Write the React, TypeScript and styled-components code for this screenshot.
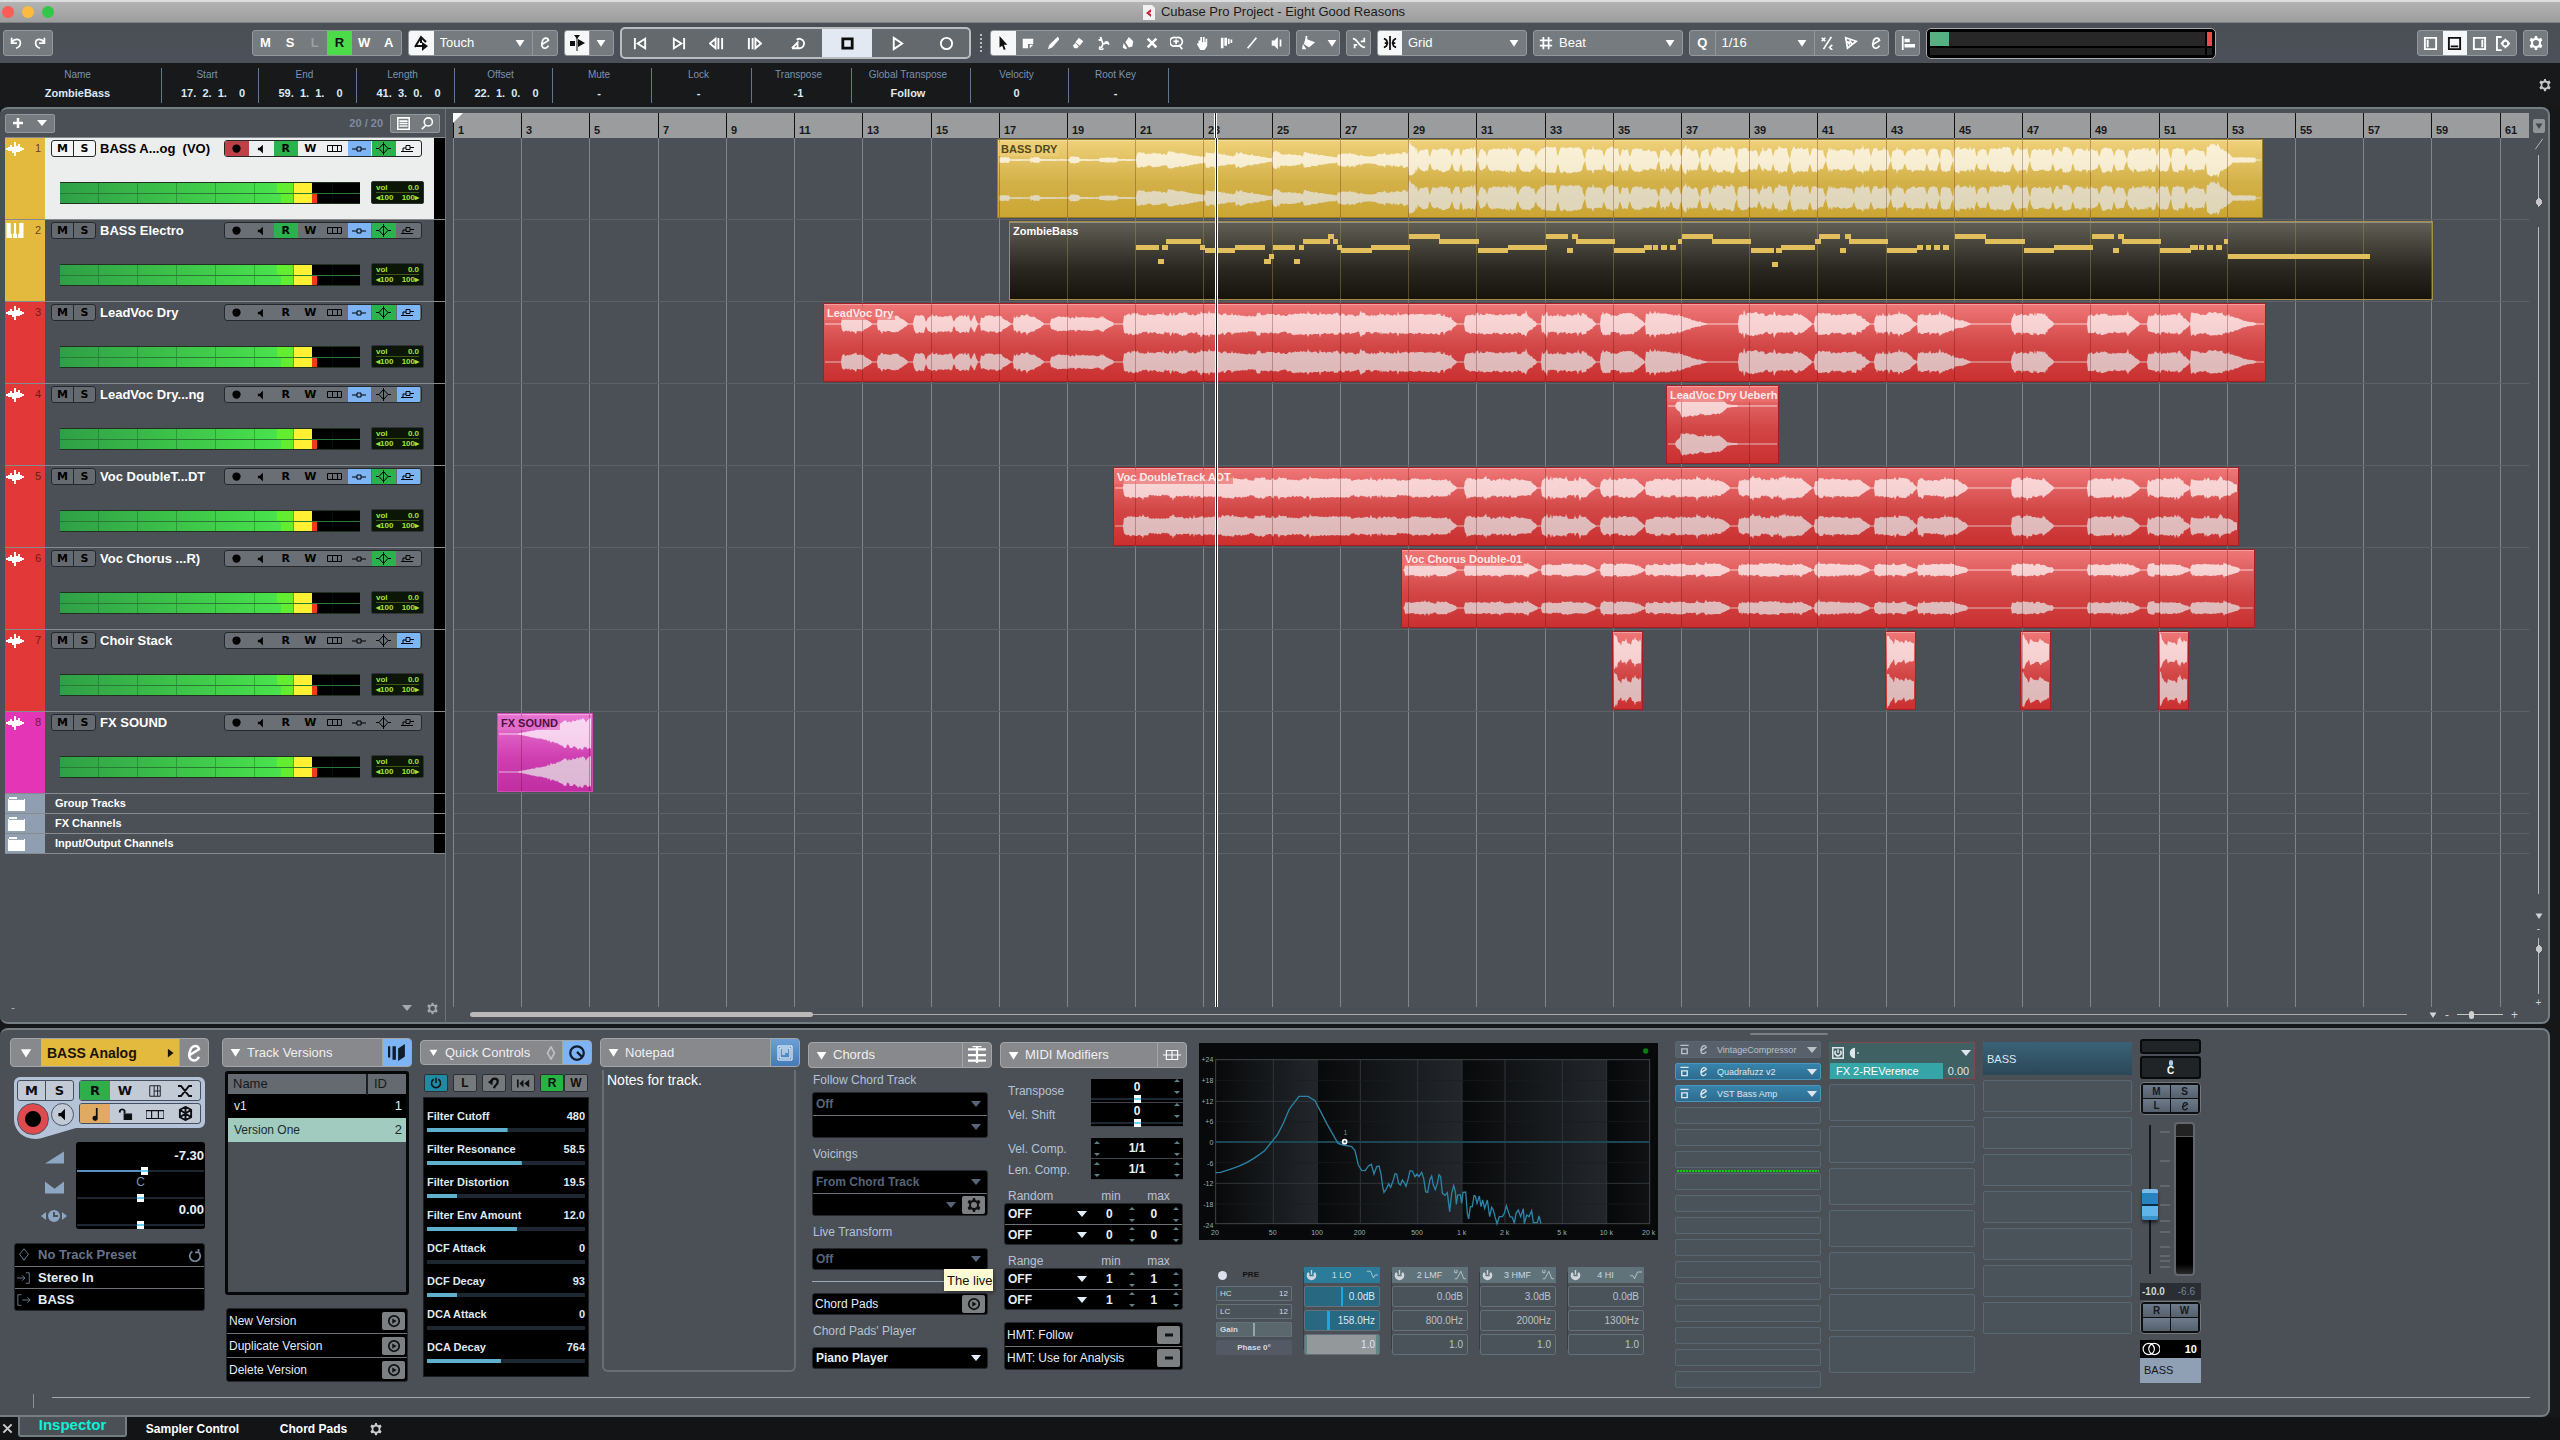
import React from "react";
import styled, { createGlobalStyle, css } from "styled-components";

/* ------------------------------------------------------------------ base */

const Global = createGlobalStyle`
  * { box-sizing: border-box; }
  html, body { margin: 0; padding: 0; background: #131517; }
  body, button, input, select, textarea, table {
    font-family: "Liberation Sans", Arial, Helvetica, sans-serif;
    font-size: 12px;
    line-height: 14px;
  }
  button, select, input, textarea { border: 0; margin: 0; padding: 0; background: none; color: inherit; border-radius: 0; outline: 0; }
  select { appearance: none; }
  svg { display: block; flex: none; }
`;

const C = {
  panel: "#4b4f56",
  edge: "#737d82",
  black: "#151719",
  group: "#757b7e",
  groupEdge: "#92989b",
  dim: "#b4c3d6",
  blue: "#7db4f5",
  green: "#2bb24c",
};

type IconProps = { d?: string; f?: string; s?: number; w?: number };
const Icon = ({ d, f, s = 16, w = 2 }: IconProps) => (
  <svg width={s} height={s} viewBox="0 0 16 16" fill="none" stroke="currentColor" strokeWidth={w} aria-hidden="true">
    {f && <path d={f} fill="currentColor" stroke="none" />}
    {d && <path d={d} />}
  </svg>
);

const P = {
  undo: "M3 2v6h6M3 8C6 2 13 3 13 8c0 3-2 5-5 6",
  redo: "M13 2v6H7M13 8C10 2 3 3 3 8c0 3 2 5 5 6",
  e: "M4 10l8-5C11 1 6 2 5 6c-2 5 0 8 3 8 2 0 3-1 4-3",
  prev: "M2 2v12M13 3L5 8l8 5z",
  next: "M14 2v12M3 3l8 5-8 5z",
  rew: "M7 3L1 8l6 5zM10 2v12M14 2v12",
  fwd: "M9 3l6 5-6 5zM6 2v12M2 2v12",
  cycle: "M1 13l6-6v6M1 13h8a5 5 0 1 0-3-9",
  stop: "M3 3h10v10H3z",
  play: "M4 2l9 6-9 6z",
  rec: "M8 2a6 6 0 1 0 0 12A6 6 0 1 0 8 2z",
};
const Gear = ({ s = 16 }: { s?: number }) => (
  <svg width={s} height={s} viewBox="0 0 16 16" aria-hidden="true">
    <path
      fillRule="evenodd"
      fill="currentColor"
      d="M7 1h2l.5 2 1.5.7 2-.9 1.4 2.4L12.900 7v2l1.500 1.800L13 13.200l-2-.9-1.500.7L9 15H7l-.5-2-1.500-.7-2 .9-1.400-2.400L3.100 9V7L1.600 5.200 3 2.800l2 .9L6.500 3zM8 5a3 3 0 1 0 0 6 3 3 0 1 0 0-6z"
    />
  </svg>
);
const Arrow = ({ s = 10 }: { s?: number }) => <Icon s={s} f="M1 3h14L8 14z" />;
const Caret = () => (
  <svg width={10} height={6} viewBox="0 0 10 6" aria-hidden="true">
    <path d="M0 0h10L5 6z" fill="currentColor" />
  </svg>
);

const Shell = styled.div`
  display: flex;
  flex-direction: column;
  height: 100vh;
  min-height: 1000px;
  overflow: hidden;
  background: ${C.black};
  color: #fff;
`;

/* ------------------------------------------------------------- title bar */

const TitleBar = styled.header`
  display: flex;
  align-items: center;
  height: 23px;
  padding: 0 14px 0 2px;
  border-top: 2px solid #dcdddf;
  background: linear-gradient(#b3b3b3, #9d9d9d);
  border-bottom: 1px solid #7e8082;
  color: #1b1b1b;
  font-size: 13px;
`;
const Lights = styled.div`
  display: flex;
  flex: 1;
  gap: 8px;
`;
const Light = styled.button<{ $c: string }>`
  width: 12px;
  height: 12px;
  border-radius: 50%;
  background: ${(p) => p.$c};
`;
const Title = styled.div`
  display: flex;
  align-items: center;
  gap: 6px;
`;
const Fill = styled.div<{ $size?: number }>`
  flex: ${(p) => (p.$size ? `0 0 ${p.$size}px` : "1")};
`;

/* --------------------------------------------------------------- toolbar */

const Toolbar = styled.div`
  display: flex;
  align-items: center;
  gap: 6px;
  height: 40px;
  padding: 0 12px 0 3px;
  background: linear-gradient(#4a4f55, #4c5059);
`;
const Group = styled.div<{ $w?: number }>`
  display: flex;
  flex: none;
  width: ${(p) => (p.$w ? p.$w + "px" : "auto")};
  height: 26px;
  border: 1px solid ${C.groupEdge};
  border-radius: 3px;
  background: ${C.group};
  overflow: hidden;
`;
const Tool = styled.button<{ $on?: boolean; $green?: boolean; $off?: boolean; $sep?: boolean }>`
  display: flex;
  flex: 1;
  align-items: center;
  justify-content: center;
  min-width: 23px;
  font-size: 13px;
  font-weight: bold;
  color: ${(p) => (p.$on || p.$green ? "#101010" : p.$off ? "#9ba0a3" : "#fff")};
  background: ${(p) => (p.$green ? "#4cdb49" : p.$on ? "#f6f7f8" : "transparent")};
  border-left: ${(p) => (p.$sep ? "1px solid " + C.groupEdge : "0")};
`;
const Pick = styled.label<{ $w: number; $sep?: boolean; $tight?: boolean }>`
  display: grid;
  align-items: center;
  width: ${(p) => p.$w}px;
  border-left: ${(p) => (p.$sep ? "1px solid " + C.groupEdge : "0")};
  > * { grid-area: 1 / 1; }
  > select { width: 100%; height: 100%; padding: 0 18px 0 ${(p) => (p.$tight ? 1 : 6)}px; font-size: 13px; line-height: 16px; }
  > svg { justify-self: end; margin-right: 7px; pointer-events: none; }
`;
const Transport = styled.div`
  display: grid;
  flex: none;
  grid-template-columns: 37px 39px 37px 39px 48px 50px 51px 46px;
  width: 351px;
  height: 32px;
  border: 2px solid #b9bdbf;
  border-radius: 5px;
  background: #63696c;
  overflow: hidden;
`;
const TransportButton = styled.button<{ $on?: boolean }>`
  display: flex;
  align-items: center;
  justify-content: center;
  color: ${(p) => (p.$on ? "#0c0c0c" : "#fff")};
  background: ${(p) => (p.$on ? "#e3e9f3" : "transparent")};
`;
const Grip = styled.div`
  width: 7px;
  height: 18px;
  background: repeating-linear-gradient(#b9bdbf 0 2px, transparent 2px 4px) center / 2px 18px no-repeat;
`;
const LoadMeter = styled.div`
  display: grid;
  grid-template-columns: 1fr 5px;
  grid-template-rows: 14px 7px;
  gap: 2px;
  width: 290px;
  height: 31px;
  padding: 3px;
  border: 1px solid #a6a9ab;
  border-radius: 5px;
  background: #000;
`;
const LoadBar = styled.div<{ $hot?: boolean; $level?: number }>`
  background: ${(p) =>
    p.$hot ? "#ea4c4c" : p.$level ? `linear-gradient(90deg, #57b083 ${p.$level}%, #272727 ${p.$level}%)` : "#202020"};
`;

const toolIcons: IconProps[] = [
  { f: "M4 0l9 10H9l2 5-2 1-2-5-3 2z" },
  { f: "M2 3h12v6H8v5H2zM10 10h4l-4 4z" },
  { f: "M14 1l1 3-8 9-5 2 2-5 9-9z" },
  { f: "M9 2l5 4-4 5-5-4zM5 8l4 4-2 2H4l-2-3z" },
  { d: "M5 1l3 8 6-1M8 9l-2 5M3 5l4-2M10 8a2 2 0 1 1 4 2M5 12a2 2 0 1 0 3 2" },
  { f: "M9 1l5 5-1 6-4 1-4-6zM3 8l4 6-2 1-3-2z" },
  { d: "M3 3l10 10M13 3L3 13", w: 3 },
  { d: "M7 2a5 5 0 1 0 0 9 5 5 0 1 0 0-9zM10 10l4 5M7 4v5M4 6h6" },
  { f: "M4 5h2V1h2v6h1V1h2v6h1V3h2v8l-3 5H6L2 9l2-1z" },
  { f: "M1 2h3v12H1zM5 2h3v9H5zM9 3h2v6H9zM12 4h2v4h-2z" },
  { d: "M13 2L3 14" },
  { f: "M2 5h3l4-4v14l-4-4H2z", d: "M12 4v8", w: 2 },
];
const toolNames = ["Select", "Range", "Draw", "Erase", "Split", "Glue", "Mute", "Zoom", "Hand", "Time Warp", "Line", "Play"];

const TopToolbar = () => (
  <Toolbar>
    <Group $w={50}>
      <Tool aria-label="Undo"><Icon d={P.undo} s={14} /></Tool>
      <Tool aria-label="Redo"><Icon d={P.redo} s={14} /></Tool>
    </Group>
    <Fill $size={187} />
    <Group $w={150}>
      <Tool>M</Tool><Tool>S</Tool><Tool $off>L</Tool><Tool $green>R</Tool><Tool>W</Tool><Tool>A</Tool>
    </Group>
    <Group $w={150}>
      <Tool $on aria-label="Automation"><Icon d="M2 12L8 2l5 5M8 2v6M3 11h8" f="M9 7l6 4-6 5z" w={2} /></Tool>
      <Pick $w={98}>
        <select aria-label="Automation mode"><option>Touch</option></select>
        <Arrow />
      </Pick>
      <Tool $sep aria-label="Edit automation"><Icon d={P.e} s={14} /></Tool>
    </Group>
    <Group $w={50}>
      <Tool $on aria-label="Auto scroll"><Icon d="M8 0v16" f="M1 6h5v5H1zM9 4l7 4-7 4zM5 0h6L8 4z" w={1} /></Tool>
      <Tool $sep aria-label="Auto scroll options"><Arrow /></Tool>
    </Group>
    <Transport>
      {([["prev", "Go to start"], ["next", "Go to end"], ["rew", "Rewind"], ["fwd", "Forward"], ["cycle", "Cycle"], ["stop", "Stop"], ["play", "Play"], ["rec", "Record"]] as const).map(
        ([k, n]) => (
          <TransportButton key={k} aria-label={n} $on={k === "stop"}>
            <Icon d={P[k]} s={15} w={k === "stop" ? 3 : 2} />
          </TransportButton>
        )
      )}
    </Transport>
    <Grip />
    <Group $w={300}>
      {toolIcons.map((t, i) => (
        <Tool key={i} aria-label={toolNames[i]} $on={i === 0}><Icon {...t} s={14} /></Tool>
      ))}
    </Group>
    <Group $w={44}>
      <Tool aria-label="Colour"><Icon s={14} f="M4 3l11 4-7 6-6-4zM1 9l4 6H0z" d="M5 0v5" /></Tool>
      <Tool aria-label="Colour options"><Arrow /></Tool>
    </Group>
    <Group $w={25}><Tool aria-label="Snap to zero"><Icon d="M1 3c6 0 6 10 14 10M10 6h4V2M3 14v-4h3" s={14} /></Tool></Group>
    <Group $w={150}>
      <Tool $on aria-label="Snap"><Icon d="M8 0v16M1 3c5 1 5 9 0 10M15 3c-5 1-5 9 0 10M2 8h4M10 8h4" s={14} /></Tool>
      <Pick $w={124}>
        <select aria-label="Snap type"><option>Grid</option></select>
        <Arrow />
      </Pick>
    </Group>
    <Group $w={150}>
      <Tool aria-label="Grid type"><Icon d="M5 1v14M11 1v14M1 5h14M1 11h14" s={14} /></Tool>
      <Pick $w={124} $tight>
        <select aria-label="Grid"><option>Beat</option></select>
        <Arrow />
      </Pick>
    </Group>
    <Group $w={200}>
      <Tool>Q</Tool>
      <Pick $w={99} $sep>
        <select aria-label="Quantize"><option>1/16</option></select>
        <Arrow />
      </Pick>
      <Tool $sep aria-label="Iterative quantize"><Icon d="M13 1L4 15M2 2l4 4M6 2L2 6M14 10l-3 3 3 3" s={14} /></Tool>
      <Tool aria-label="Audio warp"><Icon d="M2 2l12 4-10 8zM4 6l2 3 1-3 2 3" s={14} /></Tool>
      <Tool aria-label="Quantize panel"><Icon d={P.e} s={14} /></Tool>
    </Group>
    <Group $w={25}><Tool aria-label="Align"><Icon f="M1 0h2v16H1zM4 3h6v4H4zM4 9h12v4H4z" s={14} /></Tool></Group>
    <LoadMeter>
      <LoadBar $level={7} /><LoadBar $hot /><LoadBar /><LoadBar />
    </LoadMeter>
    <Fill />
    <Group $w={100}>
      <Tool aria-label="Left zone"><Icon d="M2 2h12v12H2zM5 4v8" s={15} /></Tool>
      <Tool $on aria-label="Lower zone"><Icon d="M2 2h12v12H2zM4 11h8" s={15} /></Tool>
      <Tool aria-label="Right zone"><Icon d="M2 2h12v12H2zM11 4v8" s={15} /></Tool>
      <Tool aria-label="Zone setup"><Icon d="M6 1H1v14h5M10 5a3 3 0 1 0 0 6 3 3 0 1 0 0-6zM10 3v2M10 11v2M5 8h2M13 8h2" s={15} /></Tool>
    </Group>
    <Group $w={25}><Tool aria-label="Set up toolbar"><Gear /></Tool></Group>
  </Toolbar>
);

/* -------------------------------------------------------------- info line */

const InfoLine = styled.div`
  display: flex;
  align-items: center;
  height: 44px;
  padding-right: 8px;
  background: #17191b;
`;
const InfoCell = styled.dl<{ $w: number }>`
  display: flex;
  flex-direction: column;
  align-items: center;
  gap: 6px;
  width: ${(p) => p.$w}px;
  height: 35px;
  margin: 0;
  padding: 1px 6px 0 0;
  border-right: 1px solid #5f7896;
  dt { font-size: 10px; line-height: 12px; color: #7b93b0; white-space: nowrap; }
  dd { margin: 0; font-size: 11px; line-height: 12px; font-weight: bold; color: #dde8f5; white-space: pre; }
`;
const InfoGear = styled.button`
  color: #c4c6c8;
`;
const info: [string, string, number][] = [
  ["Name", "ZombieBass", 162],
  ["Start", "    17.  2.  1.    0", 97],
  ["End", "    59.  1.  1.    0", 98],
  ["Length", "    41.  3.  0.    0", 98],
  ["Offset", "    22.  1.  0.    0", 98],
  ["Mute", "-", 99],
  ["Lock", "-", 100],
  ["Transpose", "-1", 100],
  ["Global Transpose", "Follow", 119],
  ["Velocity", "0", 98],
  ["Root Key", "-", 100],
];

/* ------------------------------------------------------------- track list */

const Workspace = styled.main`
  display: flex;
  flex: 1;
  min-height: 0;
  margin-right: 10px;
  border: solid ${C.edge};
  border-width: 2px 2px 2px 0;
  border-radius: 8px;
  background: ${C.panel};
`;
const TrackList = styled.section`
  display: flex;
  flex: none;
  flex-direction: column;
  width: 446px;
  padding-left: 5px;
  border-right: 1px solid #6d7277;
`;
const ListHead = styled.div`
  display: flex;
  align-items: center;
  height: 29px;
  padding-right: 5px;
  border-bottom: 1px solid #868b8f;
`;
const SmallGroup = styled.div`
  display: flex;
  align-items: center;
  justify-content: space-around;
  width: 50px;
  height: 19px;
  border: 1px solid ${C.groupEdge};
  border-radius: 2px;
  background: ${C.group};
`;
const Count = styled.span`
  margin: 0 7px 0 auto;
  font-size: 11px;
  font-weight: bold;
  color: #7f8ba0;
`;
const TrackRow = styled.article<{ $sel?: boolean }>`
  display: flex;
  height: 82px;
  border-bottom: 1px solid #868b8f;
  color: ${(p) => (p.$sel ? "#000" : "#fff")};
`;
const TrackTag = styled.div<{ $c: string }>`
  display: flex;
  justify-content: space-between;
  width: 40px;
  padding: 2px 4px 0 1px;
  background: ${(p) => p.$c};
  font-size: 11px;
  line-height: 17px;
  color: #fff;
  span { color: rgba(60, 20, 10, 0.75); }
`;
const TrackBody = styled.div<{ $sel?: boolean }>`
  display: flex;
  flex: 1;
  flex-direction: column;
  justify-content: space-between;
  padding: 2px 10px 15px 6px;
  background: ${(p) => (p.$sel ? "#eceded" : C.panel)};
`;
const Gutter = styled.div`
  width: 11px;
  background: #000;
`;
const TrackTop = styled.div`
  display: flex;
  align-items: center;
  height: 17px;
`;
const Pair = styled.div<{ $sel?: boolean }>`
  display: flex;
  width: 45px;
  height: 17px;
  border: 1px solid #26292c;
  border-radius: 3px;
  background: ${(p) => (p.$sel ? "#f4f5f5" : "#656a70")};
`;
const PairButton = styled.button`
  flex: 1;
  color: #000;
  font-family: "DejaVu Sans", sans-serif;
  font-size: 11px;
  font-weight: bold;
  & + & { border-left: 1px solid #26292c; }
`;
const TrackName = styled.h3`
  flex: 1;
  margin: 0 0 0 4px;
  font-size: 13px;
  line-height: 16px;
  white-space: pre;
`;
const Strip = styled.div<{ $sel?: boolean }>`
  display: flex;
  width: 198px;
  height: 17px;
  margin-right: 2px;
  border: 1px solid #26292c;
  border-radius: 3px;
  background: ${(p) => (p.$sel ? "#eeeff0" : "#6a6f75")};
  overflow: hidden;
`;
const StripButton = styled.button<{ $bg?: string }>`
  display: flex;
  flex: 1;
  align-items: center;
  justify-content: center;
  margin-right: 1px;
  color: #000;
  font-family: "DejaVu Sans", sans-serif;
  font-size: 11px;
  font-weight: bold;
  background: ${(p) => p.$bg || "transparent"};
`;
const MeterRow = styled.div`
  display: flex;
  align-items: center;
  gap: 11px;
  padding-left: 9px;
`;
const Meter = styled.div`
  width: 300px;
  height: 22px;
  border: solid #22301f;
  border-width: 1px 0;
  background: #000;
`;
const MeterChannel = styled.div<{ $g: number; $y: number; $r: number }>`
  height: 10px;
  background:
    repeating-linear-gradient(90deg, transparent 0 38px, rgba(0, 60, 20, 0.3) 38px 39px),
    linear-gradient(90deg, #2f9f47, #49e24c ${(p) => p.$g}px, #62ee2f ${(p) => p.$g}px 234px, #fff034 234px ${(p) => p.$y}px, #f03a1c ${(p) => p.$y}px ${(p) => p.$r}px, #000 ${(p) => p.$r}px);
  & + & { border-top: 1px solid #2a7a35; }
`;
const Lcd = styled.div`
  display: grid;
  grid-template-columns: 1fr 1fr;
  align-items: center;
  width: 53px;
  height: 23px;
  padding: 1px 4px;
  border: 1px solid #2e3336;
  border-radius: 2px;
  background: #0b1606;
  color: #a2e436;
  font-size: 8px;
  line-height: 9px;
  font-weight: bold;
  span:nth-child(even) { text-align: right; }
  span:nth-child(-n + 2) { border-bottom: 1px solid #3c5a14; }
`;
const FolderRow = styled.div`
  display: flex;
  height: 20px;
  border-bottom: 1px solid #868b8f;
`;
const FolderTag = styled.div`
  display: flex;
  align-items: center;
  width: 40px;
  padding-left: 3px;
  background: #8f9fb1;
`;
const FolderName = styled.div`
  flex: 1;
  padding-left: 10px;
  font-size: 11px;
  line-height: 18px;
  font-weight: bold;
`;
const ListFoot = styled.div`
  display: flex;
  align-items: center;
  gap: 14px;
  margin-top: auto;
  padding: 0 6px 4px;
  height: 24px;
  color: #a5a9ac;
  span { margin-right: auto; }
`;

const Y = "#e3ba3d";
const R = "#e33838";
const B = C.blue;
const G = C.green;
type Track = { n: string; c: string; on: (string | 0)[]; sel?: boolean; midi?: boolean };
const tracks: Track[] = [
  { n: "BASS A...og  (VO)", c: Y, on: ["#bd4146", 0, G, 0, 0, B, G, 0], sel: true },
  { n: "BASS Electro", c: Y, on: [0, 0, G, 0, 0, B, G, 0], midi: true },
  { n: "LeadVoc Dry", c: R, on: [0, 0, 0, 0, 0, B, G, B] },
  { n: "LeadVoc Dry...ng", c: R, on: [0, 0, 0, 0, 0, B, 0, B] },
  { n: "Voc DoubleT...DT", c: R, on: [0, 0, 0, 0, 0, B, G, B] },
  { n: "Voc Chorus ...R)", c: R, on: [0, 0, 0, 0, 0, 0, G, 0] },
  { n: "Choir Stack", c: R, on: [0, 0, 0, 0, 0, 0, 0, B] },
  { n: "FX SOUND", c: "#e435b6", on: [0, 0, 0, 0, 0, 0, 0, 0] },
];
const stripNames = ["Record enable", "Monitor", "Read", "Write", "Lanes", "Inserts", "Equalizer", "Sends"];
const stripIcons: React.ReactNode[] = [
  <Icon s={11} f="M8 2a6 6 0 1 0 0 12A6 6 0 1 0 8 2z" />,
  <Icon s={10} f="M3 6h3l5-5v14l-5-5H3z" />,
  "R",
  "W",
  <svg width={15} height={9} viewBox="0 0 15 9" fill="none" stroke="currentColor"><path d="M.5 1.500h14v6h-14zM5.500 1v6M10.500 1v6" /></svg>,
  <svg width={14} height={8} viewBox="0 0 14 8" fill="none" stroke="currentColor"><path d="M0 4h5M9 4h5M5 2h4v4H5z" /></svg>,
  <svg width={15} height={13} viewBox="0 0 15 13" fill="none" stroke="currentColor"><path d="M7.500 0v13M0 6.500h3M12 6.500h3M7.500 1.500l-4.500 5 4.500 5 4.500-5z" /></svg>,
  <svg width={14} height={9} viewBox="0 0 14 9" fill="none" stroke="currentColor"><path d="M0 7.500h12M2 7V4h3M9 3.500h4M5 1.500h4v4H5z" /></svg>,
];

const TrackItem = ({ t, i }: { t: Track; i: number }) => (
  <TrackRow $sel={t.sel}>
    <TrackTag $c={t.c}>
      {t.midi ? (
        <svg width={18} height={17} viewBox="0 0 16 16"><path d="M0 1h4v10h1v4H0zM6 11h1V1h2v10h1v4H6zM12 1h4v14h-5v-4h1z" fill="#fff" /></svg>
      ) : (
        <svg width={18} height={17} viewBox="0 0 18 17" stroke="#fff" strokeWidth={2}>
          <path d="M1 8v2M3 7v4M5 5v6M7 7v6M9 2v14M11 6v6M13 4v8M15 7v4M17 8v2M0 9h18" />
        </svg>
      )}
      <span>{i + 1}</span>
    </TrackTag>
    <TrackBody $sel={t.sel}>
      <TrackTop>
        <Pair $sel={t.sel}>
          <PairButton aria-label="Mute">M</PairButton>
          <PairButton aria-label="Solo">S</PairButton>
        </Pair>
        <TrackName>{t.n}</TrackName>
        <Strip $sel={t.sel}>
          {stripIcons.map((ic, k) => (
            <StripButton key={k} $bg={t.on[k] || undefined} aria-label={stripNames[k]}>{ic}</StripButton>
          ))}
        </Strip>
      </TrackTop>
      <MeterRow>
        <Meter>
          <MeterChannel $g={217} $y={252} $r={252} />
          <MeterChannel $g={221} $y={252} $r={257} />
        </Meter>
        <Lcd>
          <span>vol</span><span>0.0</span>
          <span>◂100</span><span>100▸</span>
        </Lcd>
      </MeterRow>
    </TrackBody>
    <Gutter />
  </TrackRow>
);

/* --------------------------------------------------------------- timeline */

const PX_PER_BAR = 34.11;
const ORIGIN = 453;
const barX = (bar: number) => Math.round((bar - 1) * PX_PER_BAR);
const bars = Array.from({ length: 31 }, (_, i) => 1 + i * 2);

const Timeline = styled.section`
  display: flex;
  flex: 1;
  flex-direction: column;
  min-width: 0;
  margin: 4px 0 0 7px;
`;
const RulerRow = styled.div`
  display: flex;
  height: 25px;
`;
const Ruler = styled.div`
  position: relative;
  flex: 1;
  background: #9b9c9e;
  overflow: hidden;
`;
const RulerMark = styled.div`
  position: absolute;
  top: 0;
  bottom: 0;
  padding: 11px 0 0 4px;
  border-left: 1px solid #111;
  color: #17181a;
  font-size: 11px;
  line-height: 13px;
  font-weight: bold;
`;
const Locator = styled.div`
  position: absolute;
  left: 0;
  top: 0;
  border: 5px solid transparent;
  border-top-color: #fff;
  border-left-color: #fff;
`;
const Rail = styled.div`
  display: flex;
  flex: none;
  flex-direction: column;
  align-items: center;
  gap: 5px;
  width: 19px;
  color: #d0d2d4;
  font-size: 10px;
  line-height: 8px;
`;
const RulerButton = styled.button`
  display: flex;
  align-items: center;
  justify-content: center;
  width: 12px;
  height: 14px;
  margin-top: 6px;
  border-radius: 2px;
  background: #8f9497;
  color: #43474b;
`;
const Stage = styled.div`
  display: flex;
  flex: 1;
  min-height: 0;
`;
const Canvas = styled.div`
  position: relative;
  flex: 1;
  min-width: 0;
  border-left: 1px solid #81868c;
  overflow: hidden;
`;
const GridLine = styled.div`
  position: absolute;
  top: 0;
  bottom: 0;
  width: 1px;
  background: #80858b;
`;
const Lane = styled.div<{ $h: number }>`
  position: relative;
  height: ${(p) => p.$h}px;
  border-bottom: 1px solid #5d6269;
`;
const clipSkins = {
  yellow: css`
    background: linear-gradient(#efd17a, #d3b149 55%, #cba634);
    border-color: #9a7c26;
    color: #55481d;
    --name: rgba(236, 206, 118, 0.7);
  `,
  midi: css`
    background: linear-gradient(#625f56, #2b2821 60%, #16130c);
    border-color: #a58d45;
    color: #fff;
    --name: transparent;
  `,
  red: css`
    background: linear-gradient(#ef7777, #d24646 55%, #cb3030);
    border-color: #a51f22;
    color: #fbeaea;
    --name: rgba(236, 114, 114, 0.7);
  `,
  pink: css`
    background: linear-gradient(#ea7bd2, #d040b2 55%, #c02ea2);
    border-color: #d04ab4;
    color: #4d1241;
    --name: rgba(228, 110, 204, 0.7);
  `,
};
const ClipBox = styled.div<{ $skin: keyof typeof clipSkins }>`
  position: absolute;
  top: 1px;
  height: 79px;
  border: 1px solid;
  box-shadow: inset 0 1px 0 rgba(255, 255, 255, 0.3);
  overflow: hidden;
  ${(p) => clipSkins[p.$skin]}
`;
const ClipName = styled.div`
  position: absolute;
  left: 0;
  top: 2px;
  padding: 0 2px 0 3px;
  font-size: 11px;
  line-height: 14px;
  font-weight: bold;
  white-space: nowrap;
  background: var(--name);
`;
const Cursor = styled.div`
  position: absolute;
  top: 0;
  bottom: 0;
  left: 761px;
  width: 3px;
  background: linear-gradient(90deg, #fff 1px, #222 1px 2px, #fff 2px);
`;

/* Each phrase is [start, end, level at start, level at end] in arrangement pixels. */
type Phrase = [number, number, number, number];

const rng = (seed: number) => () => {
  seed = (seed * 1664525 + 1013904223) % 4294967296;
  return seed / 4294967296;
};
const wavePath = (phrases: Phrase[], x0: number, w: number, mid: number, seed: number) => {
  const rand = rng(seed);
  const up: string[] = [];
  const lo: string[] = [];
  let slow = 0.85;
  for (let x = 1; x < w - 2; x += 1) {
    const p = phrases.find((q) => x + x0 >= q[0] && x + x0 <= q[1]);
    let a = 0.6;
    let b = 0.6;
    if (p) {
      const t = (x + x0 - p[0]) / Math.max(1, p[1] - p[0]);
      if (rand() < 0.2) slow = 0.68 + rand() * 0.27;
      const peak = rand() < 0.04 ? 0.25 : 0;
      const level = p[2] + (p[3] - p[2]) * t;
      a = Math.max(0.7, level * (slow + peak + (rand() - 0.5) * 0.16));
      b = Math.max(0.7, level * (slow + peak + (rand() - 0.5) * 0.16));
    }
    up.push(`${x} ${(mid - a).toFixed(1)}`);
    lo.unshift(`${x} ${(mid + b).toFixed(1)}`);
  }
  return `M${up.join("L")}L${lo.join("L")}z`;
};

const chain = (from: number, to: number, amp: number, seed: number): Phrase[] => {
  const rand = rng(seed);
  const out: Phrase[] = [];
  let x = from;
  while (x < to) {
    const l = 7 + Math.floor(rand() * 24);
    const end = Math.min(to, x + l);
    out.push([x, x + 1, amp * 0.7, amp], [x + 2, end - 2, amp * 1.1, amp * 1.1], [end - 1, end, amp * 0.6, amp * 0.35]);
    x = end + (rand() < 0.45 ? 2 : 1);
  }
  return out;
};
const vox = (spans: [number, number, number?][], amp: number): Phrase[] =>
  spans.flatMap(([a, b, tail]) =>
    tail !== undefined
      ? ([[a, a + (b - a) * 0.45, amp, amp], [a + (b - a) * 0.45, b, amp, tail]] as Phrase[])
      : ([[a, a + 4, amp * 0.8, amp], [a + 4, b - 9, amp, amp * 0.95], [b - 9, b, amp * 0.9, 2]] as Phrase[])
  );

const bassHits: Phrase[] = [
  [997, 1008, 3, 3], [1030, 1038, 3, 3], [1069, 1078, 4, 3], [1099, 1116, 3, 3], [997, 1135, 1, 1],
  [1136, 1166, 10, 6], [1167, 1204, 10, 3], [1205, 1234, 9, 5], [1235, 1271, 9, 2], [1272, 1302, 10, 5], [1303, 1336, 10, 3],
  [1337, 1375, 8, 4], [1376, 1407, 6, 9], [1408, 1416, 20, 12],
];
const later: [number, number, number?][] = [
  [1464, 1535], [1541, 1594], [1600, 1643], [1645, 1728], [1738, 1810], [1814, 1868], [1874, 1915], [1917, 1966],
  [2011, 2052], [2087, 2138], [2147, 2188],
];
const leadPhrases = [
  ...vox([[841, 870], [877, 906]], 10),
  ...chain(913, 976, 9, 3),
  ...vox([[980, 1009], [1013, 1042]], 10),
  ...vox([[1050, 1112]], 8),
  ...vox([[1123, 1455], ...later.slice(0, 3), [1645, 1705, 1], ...later.slice(4, 7), [1917, 1969, 1], ...later.slice(8), [2190, 2255, 1]], 12),
];
const doublePhrases = vox([[1123, 1455], ...later, [2190, 2238]], 11);
const chorusPhrases = vox([[1404, 1455], [1464, 1536], ...later.slice(1), [2190, 2238]], 7);
const choir = (x: number): Phrase[] => [[x + 1, x + 3, 20, 20], [x + 4, x + 8, 16, 9], [x + 9, x + 18, 15, 10], [x + 19, x + 28, 16, 11]];

type Clip = { lane: number; name?: string; x: number; w: number; skin: keyof typeof clipSkins; wave?: Phrase[] };
const clips: Clip[] = [
  { lane: 0, name: "BASS DRY", x: 997, w: 1266, skin: "yellow", wave: [...bassHits, ...chain(1417, 2205, 12, 7), [2206, 2222, 18, 14], [2223, 2232, 12, 3], [2233, 2254, 3, 3]] },
  { lane: 1, name: "ZombieBass", x: 1009, w: 1424, skin: "midi" },
  { lane: 2, name: "LeadVoc Dry", x: 823, w: 1443, skin: "red", wave: leadPhrases },
  { lane: 3, name: "LeadVoc Dry Ueberh", x: 1666, w: 113, skin: "red", wave: [[1675, 1679, 3, 8], [1680, 1716, 12, 11], [1717, 1725, 11, 4], [1726, 1736, 2, 1]] },
  { lane: 4, name: "Voc DoubleTrack ADT", x: 1113, w: 1126, skin: "red", wave: doublePhrases },
  { lane: 5, name: "Voc Chorus Double-01", x: 1401, w: 854, skin: "red", wave: chorusPhrases },
  ...[1612, 1885, 2020, 2158].map((x): Clip => ({ lane: 6, x, w: 31, skin: "red", wave: choir(x) })),
  { lane: 7, name: "FX SOUND", x: 497, w: 96, skin: "pink", wave: [[518, 545, 1, 7], [546, 562, 7, 14], [563, 591, 15, 16]] },
];

/* MIDI notes: [start tick, end tick, row offset]; ticks count from the first visible bar of the part. */
const TICKS_PER_PX = 1.96;
const PART_TICK = 57;
const notes: [number, number, number][] = [
  [304, 349, 23], [347, 359, 37], [355, 367, 23], [363, 431, 17], [429, 439, 23], [439, 498, 26], [498, 557, 23], [555, 568, 37],
  [564, 574, 32], [572, 615, 23], [613, 625, 37], [623, 633, 23], [631, 684, 17], [680, 692, 12], [690, 700, 17], [698, 708, 23],
  [706, 766, 26], [764, 841, 23], [839, 900, 12], [898, 976, 17], [974, 1033, 26], [1033, 1109, 23], [1107, 1151, 12], [1149, 1160, 26],
  [1158, 1170, 12], [1166, 1243, 17], [1241, 1301, 26], [1299, 1315, 23], [1317, 1327, 23], [1333, 1345, 23], [1350, 1362, 23],
  [1366, 1374, 17], [1374, 1435, 12], [1433, 1509, 17], [1509, 1554, 26], [1550, 1562, 40], [1558, 1570, 26], [1568, 1635, 23],
  [1635, 1647, 17], [1643, 1684, 12], [1684, 1696, 26], [1694, 1705, 12], [1701, 1778, 17], [1776, 1835, 26], [1835, 1847, 23],
  [1852, 1862, 23], [1868, 1880, 23], [1886, 1897, 23], [1909, 1970, 12], [1968, 2046, 17], [2044, 2103, 26], [2103, 2180, 23],
  [2178, 2221, 12], [2219, 2231, 26], [2229, 2240, 12], [2237, 2313, 17], [2311, 2372, 26], [2370, 2385, 23], [2387, 2397, 23],
  [2403, 2415, 23], [2421, 2433, 23], [2436, 2444, 17], [2444, 2723, 32],
];

const ClipView = ({ c, i }: { c: Clip; i: number }) => (
  <ClipBox $skin={c.skin} style={{ left: c.x - ORIGIN - 1, width: c.w }}>
    <svg width={c.w - 2} height={77} aria-hidden="true">
      {c.wave && (
        <>
          <path d={wavePath(c.wave, c.x, c.w, 20, i * 97 + 5)} fill="#fff" fillOpacity={0.72} />
          <path d={wavePath(c.wave, c.x, c.w, 58, i * 97 + 5)} fill="#e6e6e6" fillOpacity={0.75} />
        </>
      )}
      {bars.map((b) => {
        const x = barX(b) + ORIGIN - c.x - 1;
        return x > 0 && x < c.w - 2 ? (
          <rect key={b} x={x} y={0} width={1} height={77} fill={c.wave ? "#500" : "#b0974a"} fillOpacity={c.wave ? 0.28 : 0.4} />
        ) : null;
      })}
      {!c.wave &&
        notes.map(([a, b, r], k) => (
          <rect key={k} x={Math.round((a - PART_TICK) / TICKS_PER_PX)} y={r} width={Math.round((b - a) / TICKS_PER_PX)} height={5} fill="#e0bf5c" />
        ))}
    </svg>
    {c.name && <ClipName>{c.name}</ClipName>}
  </ClipBox>
);

const Line = styled.div<{ $len?: number; $knob?: number; $flow?: boolean }>`
  flex: ${(p) => (p.$flow ? 1 : "none")};
  width: 8px;
  height: ${(p) => (p.$len ? p.$len + "px" : "auto")};
  background:
    ${(p) => (p.$knob !== undefined ? `radial-gradient(3px 4px at 4px ${p.$knob}px, #c6c8ca 90%, transparent),` : "")}
    linear-gradient(#b6b8ba, #b6b8ba) center / 1px 100% no-repeat;
`;
const BottomScroll = styled.div`
  display: flex;
  align-items: center;
  gap: 8px;
  height: 15px;
  padding: 0 30px 0 17px;
  color: #d0d2d4;
`;
const ScrollTrack = styled.div`
  display: flex;
  align-items: center;
  flex: 1;
  height: 5px;
  margin-right: 14px;
  background: linear-gradient(#b0a9aa, #b0a9aa) center / 100% 1px no-repeat;
`;
const ScrollThumb = styled.div`
  width: 343px;
  height: 5px;
  border-radius: 3px;
  background: #bcb8b8;
`;
const ZoomSlider = styled.input`
  appearance: none;
  width: 46px;
  height: 9px;
  background: linear-gradient(#c4c4c4, #c4c4c4) center / 100% 1px no-repeat;
  &::-webkit-slider-thumb { appearance: none; width: 5px; height: 8px; border-radius: 3px; background: #cfcfcf; }
`;

/* ------------------------------------------------------------- lower zone */

const Lower = styled.section`
  position: relative;
  margin: 4px 10px 0 0;
  border: solid ${C.edge};
  border-width: 2px 2px 2px 0;
  border-radius: 8px 8px 8px 0;
  background: ${C.panel};
`;
const RackHandle = styled.div`
  position: absolute;
  top: 3px;
  left: 1750px;
  width: 78px;
  height: 3px;
  border-top: 2px solid #7c8084;
  border-radius: 2px;
`;
const Deck = styled.div`
  display: grid;
  grid-template-columns: 204px 190px 172px 200px 184px 191px 468px 146px 146px 149px 61px;
  align-items: start;
  gap: 8px;
  padding: 8px 10px 0;
`;
const Section = styled.section<{ $w?: number; $top?: number }>`
  display: flex;
  flex-direction: column;
  width: ${(p) => (p.$w ? p.$w + "px" : "100%")};
  padding-top: ${(p) => p.$top || 0}px;
`;
const Head = styled.div<{ $h?: number }>`
  display: flex;
  align-items: stretch;
  height: ${(p) => p.$h || 29}px;
  border: 1px solid #a3a5a7;
  border-radius: 4px;
  background: #87898c;
  overflow: hidden;
`;
const HeadToggle = styled.button<{ $wide?: boolean }>`
  display: flex;
  align-items: center;
  justify-content: center;
  width: ${(p) => (p.$wide ? 30 : 24)}px;
`;
const HeadTitle = styled.h2<{ $track?: boolean }>`
  display: flex;
  flex: 1;
  align-items: center;
  justify-content: space-between;
  margin: 0;
  padding: ${(p) => (p.$track ? "0 3px 0 6px" : "0 4px 0 0")};
  background: ${(p) => (p.$track ? Y : "transparent")};
  color: ${(p) => (p.$track ? "#1a1405" : "#f0f0f0")};
  font-size: ${(p) => (p.$track ? 14 : 13)}px;
  font-weight: ${(p) => (p.$track ? "bold" : "normal")};
`;
const HeadButton = styled.button<{ $bg?: string; $dark?: boolean }>`
  display: flex;
  align-items: center;
  justify-content: center;
  width: 29px;
  border-left: 1px solid #a3a5a7;
  background: ${(p) => p.$bg || "transparent"};
  color: ${(p) => (p.$dark ? "#111c2c" : "#fff")};
`;
const Faint = styled.span`
  opacity: 0.5;
`;

const Black = styled.div<{ $mt?: number; $row?: number }>`
  display: flex;
  flex-direction: column;
  margin: ${(p) => p.$mt || 0}px 4px 0;
  border: 1px solid #23272b;
  border-radius: 3px;
  background: #000;
  > * + * { border-top: 1px solid #6b7176; }
  > * { flex: none; height: ${(p) => p.$row || 22}px; }
`;
const Row = styled.div<{ $dim?: boolean; $bold?: boolean }>`
  display: flex;
  align-items: center;
  gap: ${(p) => (p.$bold ? 7 : 8)}px;
  padding: 0 2px;
  color: ${(p) => (p.$dim ? "#66758a" : "#e3edf8")};
  font-weight: ${(p) => (p.$bold ? "bold" : "normal")};
  > span { flex: 1; font-size: ${(p) => (p.$bold ? 13 : 12)}px; }
  > svg { color: #74879a; }
`;
const Chip = styled.button`
  display: flex;
  align-items: center;
  justify-content: center;
  width: 23px;
  height: 18px;
  border-radius: 2px;
  background: #7d8083;
  color: #111;
`;
const Label = styled.div<{ $h?: number }>`
  height: ${(p) => p.$h || 32}px;
  padding: 0 5px;
  display: flex;
  align-items: center;
  color: ${C.dim};
`;

/* inspector */
const Cluster = styled.div`
  position: relative;
  display: grid;
  grid-template-columns: 57px 122px;
  grid-template-rows: 21px 21px;
  gap: 2px 5px;
  height: 62px;
  margin: 10px 4px 0;
  padding: 3px;
`;
const ClusterShape = styled.svg`
  position: absolute;
  left: 0;
  top: 0;
`;
const Keys = styled.div`
  position: relative;
  display: flex;
  border: 1px solid #44505f;
  border-radius: 3px;
  background: #c2cad6;
  overflow: hidden;
`;
const Key = styled.button<{ $bg?: string; $sep?: boolean }>`
  display: flex;
  flex: 1;
  align-items: center;
  justify-content: center;
  font-family: "DejaVu Sans", sans-serif;
  font-size: 13px;
  font-weight: bold;
  color: #0d0f12;
  background: ${(p) => p.$bg || "transparent"};
  border-left: ${(p) => (p.$sep ? "1px solid #44505f" : "0")};
`;
const Rounds = styled.div`
  position: relative;
  display: flex;
  align-items: flex-start;
  gap: 2px;
`;
const RoundKey = styled.button<{ $rec?: boolean }>`
  display: flex;
  flex: none;
  align-items: center;
  justify-content: center;
  width: ${(p) => (p.$rec ? 32 : 23)}px;
  height: ${(p) => (p.$rec ? 32 : 23)}px;
  border: 1px solid #4c5460;
  border-radius: 50%;
  background: ${(p) => (p.$rec ? "radial-gradient(#000 0 35%, #df4a4f 40%)" : "#c2cad6")};
  color: #000;
`;
const Levels = styled.div`
  display: grid;
  grid-template-columns: 58px 1fr;
  margin: 3px 4px 0 8px;
`;
const LevelIcons = styled.div`
  display: flex;
  flex-direction: column;
  align-items: center;
  justify-content: space-around;
  padding-left: 14px;
  color: #8da6c4;
`;
const LevelBox = styled.div`
  padding: 6px 1px 0;
  border-radius: 3px;
  background: #000;
`;
const LevelValue = styled.label<{ $c?: boolean }>`
  display: block;
  height: 18px;
  text-align: ${(p) => (p.$c ? "center" : "right")};
  font-size: ${(p) => (p.$c ? 12 : 13)}px;
  line-height: 15px;
  font-weight: ${(p) => (p.$c ? "normal" : "bold")};
  color: ${(p) => (p.$c ? "#7d95b4" : "#e8f1fb")};
`;
const thumbed = css`
  &::-webkit-slider-thumb {
    appearance: none;
    width: 7px;
    height: 8px;
    background: linear-gradient(#fff 0 3px, #66d4ff 3px 5px, #fff 5px);
  }
`;
const Slider = styled.input<{ $fill?: number; $thumb?: boolean; $c?: string }>`
  appearance: none;
  display: block;
  width: 100%;
  height: ${(p) => (p.$thumb ? 9 : 4)}px;
  background:
    linear-gradient(${(p) => p.$c || "#5fb0cc"}, ${(p) => p.$c || "#5fb0cc"}) left center / ${(p) => p.$fill || 0}% ${(p) => (p.$thumb ? 2 : 4)}px no-repeat,
    linear-gradient(#1d2732, #1d2732) center / 100% ${(p) => (p.$thumb ? 2 : 4)}px no-repeat;
  &::-webkit-slider-thumb { appearance: none; width: 1px; height: 1px; }
  ${(p) => p.$thumb && thumbed}
`;

/* versions */
const VersionFrame = styled.div`
  height: 224px;
  margin: 4px 3px 0;
  border: 3px solid #060708;
  border-radius: 3px;
`;
const VersionTable = styled.table`
  width: 100%;
  border-collapse: collapse;
  font-size: 13px;
  th { height: 20px; padding: 0 5px; background: #656a71; color: #15181b; font-weight: normal; text-align: left; font-size: 13px; border-bottom: 1px solid #000; }
  th + th { width: 39px; border-left: 2px solid #1c1f22; padding: 0 6px; }
  td { height: 24px; padding: 0 6px; background: #000; color: #dbe8f2; font-size: 12px; }
  td + td { text-align: right; padding: 0 4px; font-size: 13px; }
  tr[aria-selected="true"] td { background: #a1cbbf; color: #1c2b28; }
`;

/* quick controls */
const MiniBar = styled.div`
  display: flex;
  gap: 5px;
  margin: 9px 3px 5px 4px;
`;
const Mini = styled.button<{ $bg?: string }>`
  display: flex;
  align-items: center;
  justify-content: center;
  width: 24px;
  height: 18px;
  border: 1px solid #2c3034;
  border-radius: 2px;
  background: ${(p) => p.$bg || "#76797c"};
  color: #0e1012;
  font-size: 12px;
  font-weight: bold;
`;
const MiniPair = styled.div`
  display: flex;
`;
const QuickBox = styled.div`
  height: 280px;
  margin: 0 3px;
  padding: 11px 3px 0;
  border: 1px solid #1c1f22;
  background: #000;
`;
const Quick = styled.label`
  display: block;
  height: 33px;
`;
const QuickText = styled.span`
  display: flex;
  justify-content: space-between;
  height: 19px;
  font-size: 11px;
  font-weight: bold;
  color: #dfe8f3;
`;

/* notepad */
const Notes = styled.textarea`
  display: block;
  width: 194px;
  height: 302px;
  margin: 3px 2px 0;
  padding: 2px 3px;
  border: 2px solid #696d75;
  border-top: 0;
  border-radius: 0 0 6px 6px;
  resize: none;
  font-size: 14px;
  line-height: 17px;
  color: #fff;
`;

/* dropdown rows */
const Drop = styled.label<{ $on?: boolean }>`
  display: grid;
  align-items: center;
  color: ${(p) => (p.$on ? "#e3edf8" : "#56657a")};
  > * { grid-area: 1 / 1; }
  > select { width: 100%; height: 100%; padding: 0 3px; font-weight: bold; }
  > svg { justify-self: end; margin-right: 6px; pointer-events: none; }
`;
const DropRow = styled.div`
  display: flex;
  align-items: center;
  padding-right: 2px;
  ${Drop} { flex: 1; height: 100%; }
`;
const TipLine = styled.div`
  position: relative;
  height: 23px;
  margin: 0 4px;
  background: linear-gradient(#9aa6b8, #9aa6b8) 0 11px / 100% 1px no-repeat;
`;
const Tip = styled.div`
  position: absolute;
  right: -5px;
  top: -1px;
  width: 49px;
  height: 22px;
  padding: 0 3px;
  background: #fdfbd2;
  color: #111;
  font-size: 13px;
  line-height: 23px;
  white-space: nowrap;
  box-shadow: 1px 2px 4px rgba(0, 0, 0, 0.4);
`;

/* midi modifiers */
const ModGrid = styled.div<{ $mt: number; $row: number }>`
  display: grid;
  grid-template-columns: 87px 92px;
  grid-auto-rows: ${(p) => p.$row}px;
  margin: ${(p) => p.$mt}px 4px 0;
`;
const ModLabel = styled.div`
  display: flex;
  align-items: center;
  padding-left: 4px;
  color: ${C.dim};
`;
const ModCell = styled.div`
  display: grid;
  grid-template-columns: 12px 1fr 12px;
  align-items: center;
  justify-items: center;
  background: #000;
  border-bottom: 1px solid #3d454d;
  color: #e8f1fb;
  font-weight: bold;
  > input { grid-column: 1 / -1; }
`;
const RangeRow = styled.div`
  display: grid;
  grid-template-columns: 88px 1fr 12px 1fr 12px;
  align-items: center;
  justify-items: center;
  color: #e8f1fb;
  font-weight: bold;
  ${Drop} { justify-self: stretch; height: 100%; }
`;
const RangeHead = styled.div`
  display: grid;
  grid-template-columns: 84px 46px 1fr;
  align-items: end;
  justify-items: center;
  height: 23px;
  margin: 0 4px;
  color: ${C.dim};
  > :first-child { justify-self: start; padding-left: 4px; }
`;
const Spin = () => (
  <svg width={6} height={15} viewBox="0 0 6 15" aria-hidden="true"><path d="M0 3h6L3 0zM0 12h6l-3 3z" fill="#5d7f86" /></svg>
);

/* equalizer */
const EqControls = styled.div`
  display: grid;
  grid-template-columns: 76px 76px 76px 76px 76px;
  gap: 12px;
  margin: 27px 0 0 17px;
`;
const EqColumn = styled.div`
  display: flex;
  flex-direction: column;
  gap: 3px;
  height: 88px;
  & + & { box-shadow: -6px 0 0 -5px #3a3e44; }
`;
const EqHead = styled.button<{ $on?: boolean; $pre?: boolean }>`
  display: flex;
  align-items: center;
  justify-content: space-between;
  height: 16px;
  padding: 0 2px;
  background: ${(p) => (p.$pre ? "transparent" : p.$on ? "#2a7c9a" : "#60737b")};
  color: ${(p) => (p.$pre ? "#101214" : "#cfd6db")};
  font-size: ${(p) => (p.$pre ? 8 : 9)}px;
  font-weight: ${(p) => (p.$pre ? "bold" : "normal")};
`;
const Lamp = styled.span`
  width: 9px;
  height: 9px;
  border-radius: 50%;
  background: #d9e0ec;
`;
const EqField = styled.input<{ $bg?: string }>`
  width: 76px;
  height: 21px;
  padding: 0 4px;
  border: 1px solid #64707a;
  border-radius: 2px;
  background: ${(p) => p.$bg || "#4b535a"};
  color: ${(p) => (p.$bg ? "#dbe9f2" : "#b9c1c9")};
  font-size: 10px;
  text-align: right;
`;
const PreRow = styled.button<{ $gain?: boolean; $phase?: boolean }>`
  display: flex;
  align-items: center;
  justify-content: ${(p) => (p.$phase ? "center" : "space-between")};
  height: 15px;
  padding: 0 3px;
  border: 1px solid ${(p) => (p.$phase ? "#525964" : "#64707a")};
  border-radius: 1px;
  background: ${(p) =>
    p.$gain ? "linear-gradient(90deg, #5a676d 48%, #8fa7b5 48% 52%, #5a676d 52%)" : p.$phase ? "#535a65" : "#4b535a"};
  color: #d3dae2;
  font-size: 8px;
  font-weight: ${(p) => (p.$phase || p.$gain ? "bold" : "normal")};
`;

const EQ_CURVE =
  "M107 458 122 457 150 448 175 439 200 428 225 413 252 394 270 372 293 343 310 310 328 267 357 229 384 229 405 242 440 310 474 370 490 375 515 380 525 392 535 435 545 451 556 452 565 438 574 433 582 462 590 440 597 438 603 462 608 500 612 517 620 505 626 491 632 502 640 480 645 461 650 462 656 490 661 495 667 480 673 488 678 499 685 475 690 452 697 453 705 470 711 462 717 470 725 457 731 475 737 515 743 517 750 478 755 468 760 495 766 509 772 490 777 464 782 470 787 520 795 526 802 518 809 575 815 520 821 497 826 515 829 553 833 525 841 524 845 550 849 517 857 516 862 580 866 597 871 560 877 560 882 527 886 528 891 550 898 528 903 560 908 540 914 565 922 540 929 590 935 562 940 570 945 590 951 611 958 590 967 590 973 580 979 557 985 575 990 590 997 592 1003 610 1008 580 1015 570 1022 590 1030 566 1033 611 1040 585 1047 590 1055 572 1060 608 1072 608 1077 588 1083 611";

const EqGraph = () => (
  <svg width={459} height={197} viewBox="57 69 1377 591" aria-label="Equalizer curve" role="img">
    <defs>
      <linearGradient id="band"><stop offset="0" stopColor="#08090a" /><stop offset="1" stopColor="#23272b" /></linearGradient>
      <linearGradient id="bandEnd"><stop offset="0" stopColor="#07080a" /><stop offset="1" stopColor="#101214" /></linearGradient>
    </defs>
    <rect x={57} y={69} width={1377} height={591} fill="#08090a" />
    <rect x={107} y={119} width={307} height={492} fill="url(#band)" />
    <rect x={414} y={119} width={432} height={492} fill="url(#band)" />
    <rect x={846} y={119} width={434} height={492} fill="url(#band)" />
    <rect x={1280} y={119} width={129} height={492} fill="url(#bandEnd)" />
    <path d="M107 244H1409M107 490H1409M280 119V611M541 119V611M713 119V611M846 119V611M975 119V611M1147 119V611M1280 119V611" stroke="#30353a" strokeWidth={3} />
    <path d="M107 181H1409M107 305H1409M107 428H1409M107 552H1409" stroke="#1b1e21" strokeWidth={2} />
    <rect x={107} y={119} width={1302} height={492} fill="none" stroke="#41464a" strokeWidth={3} />
    <path d="M107 366H1409" stroke="#1d4552" strokeWidth={6} />
    <path d={EQ_CURVE} fill="none" stroke="#2b83a5" strokeWidth={4} />
    <circle cx={494} cy={365} r={6} fill="none" stroke="#fff" strokeWidth={5} />
    <circle cx={1397} cy={93} r={8} fill="#0b7d12" />
    <g fill="#8fb0b2" fontSize={21} fontFamily="Liberation Sans, Arial, sans-serif" textAnchor="end">
      {["+24", "+18", "+12", "+6", "0", "-6", "-12", "-18", "-24"].map((t, i) => (
        <text key={t} x={100} y={127 + i * 62}>{t}</text>
      ))}
    </g>
    <g fill="#8fb0b2" fontSize={21} fontFamily="Liberation Sans, Arial, sans-serif" textAnchor="middle">
      <text x={496} y={345} fill="#7b8a90">1</text>
      {([["20", 105], ["50", 278], ["100", 411], ["200", 539], ["500", 711], ["1 k", 845], ["2 k", 974], ["5 k", 1146], ["10 k", 1279], ["20 k", 1406]] as const).map(([t, x]) => (
        <text key={t} x={x} y={644}>{t}</text>
      ))}
    </g>
  </svg>
);

/* channel strip slots */
const SlotColumn = styled.section<{ $top: number }>`
  display: flex;
  flex-direction: column;
  gap: 5px;
  padding-top: ${(p) => p.$top}px;
`;
const Slot = styled.button<{ $h: number; $kind?: "off" | "on" }>`
  display: flex;
  align-items: center;
  gap: 8px;
  height: ${(p) => p.$h}px;
  padding: 0 3px;
  border: 1px solid ${(p) => (p.$kind === "on" ? "#4796bd" : "#586872")};
  border-radius: 2px;
  background: ${(p) => (p.$kind === "on" ? "linear-gradient(#3783ab, #2e6c8f)" : p.$kind === "off" ? "#58606b" : "#4b535a")};
  color: ${(p) => (p.$kind === "off" ? "#b9c1c9" : "#dfe5ea")};
  font-size: 9px;
  text-align: left;
  > span { flex: 1; }
`;
const SendSlot = styled.div`
  display: grid;
  grid-template-rows: 20px 1fr;
  height: 37px;
  border: 1px solid #7d4a4e;
  background: #3f6164;
  color: #dfe5ea;
`;
const SendHead = styled.div`
  display: flex;
  align-items: center;
  gap: 5px;
  padding: 0 3px 0 2px;
  > :last-child { margin-left: auto; }
`;
const SendValue = styled.div`
  display: flex;
  align-items: center;
  font-size: 11px;
  > span:first-child { width: 113px; padding-left: 6px; line-height: 16px; background: #35a5a8; color: #fff; }
  > span:last-child { flex: 1; text-align: center; }
`;
const RouteSlot = styled.button`
  height: 33px;
  padding: 0 4px;
  background: linear-gradient(#3a6277, #2c4757);
  color: #dbe6ee;
  font-size: 11px;
  text-align: left;
`;
const GreenLine = styled.div`
  position: absolute;
  left: 2px;
  right: 2px;
  top: 132px;
  height: 2px;
  background: repeating-linear-gradient(90deg, #19c81c 0 2px, #0d7a15 2px 3px);
`;
const SlotWrap = styled.div`
  position: relative;
`;

/* fader */
const FaderColumn = styled.section`
  display: flex;
  flex-direction: column;
  padding-top: 1px;
`;
const Well = styled.div<{ $h: number }>`
  display: flex;
  flex-direction: column;
  align-items: center;
  justify-content: center;
  height: ${(p) => p.$h}px;
  margin-bottom: 2px;
  border: 2px solid #08090a;
  border-radius: 3px;
  background: #202427;
  font-size: 10px;
  line-height: 10px;
  font-weight: bold;
`;
const PanDot = styled.span`
  width: 4px;
  height: 6px;
  border-radius: 2px;
  background: #a9cbe8;
`;
const Pads = styled.div`
  display: grid;
  grid-template-columns: 1fr 1fr;
  grid-template-rows: 1fr 1fr;
  gap: 1px;
  height: 33px;
  margin-top: 1px;
  padding: 2px;
  border: 1px solid #73777b;
  border-radius: 4px;
  background: #0d0f11;
`;
const Pad = styled.button`
  display: flex;
  align-items: center;
  justify-content: center;
  background: linear-gradient(#6d7b8b, #56606d);
  color: #15181c;
  font-size: 10px;
  line-height: 10px;
  font-weight: bold;
`;
const FaderArea = styled.div`
  display: grid;
  grid-template-columns: 20px 14px 21px;
  height: 155px;
  margin-top: 7px;
  align-items: start;
`;
const Fader = styled.input`
  writing-mode: vertical-lr;
  direction: rtl;
  appearance: none;
  width: 20px;
  height: 149px;
  margin-top: 3px;
  background: linear-gradient(#131517, #131517) center / 2px 100% no-repeat;
  &::-webkit-slider-thumb {
    appearance: none;
    width: 16px;
    height: 31px;
    border-radius: 2px;
    background: linear-gradient(#79bde8 0 4px, #2683bd 4px 15px, #0b2c42 15px 17px, #5fb4e8 17px 27px, #3b93cc 27px);
    box-shadow: 0 3px 3px rgba(0, 0, 0, 0.5);
  }
`;
const PeakMeter = styled.div`
  height: 154px;
  border: 2px solid #63676b;
  border-radius: 4px;
  background: linear-gradient(#222 0 12px, #555 12px 13px, #000 13px 140px, #2a2a2a);
`;
const Readout = styled.div`
  display: flex;
  align-items: center;
  justify-content: space-between;
  height: 17px;
  margin-top: 6px;
  padding: 0 6px 0 2px;
  background: #2a2e33;
  font-size: 10px;
  color: #77818c;
  > :first-child { color: #cfd6dd; font-weight: bold; }
`;
const ChannelNo = styled.div`
  display: flex;
  align-items: center;
  justify-content: space-between;
  height: 18px;
  margin-top: 6px;
  padding: 0 4px 0 2px;
  background: #000;
  font-size: 11px;
  font-weight: bold;
`;
const ChannelName = styled.div`
  height: 25px;
  padding-left: 4px;
  background: #8fa0b4;
  color: #14171a;
  font-size: 11px;
  line-height: 24px;
`;
const DeckFoot = styled.div`
  display: flex;
  height: 27px;
  padding: 6px 18px 0 33px;
`;
const Tick = styled.div`
  width: 1px;
  height: 14px;
  margin-right: 18px;
  background: #8b9294;
`;
const Rule = styled.div`
  flex: 1;
  height: 1px;
  margin-top: 3px;
  background: #a5a8aa;
`;

/* tabs */
const Tabs = styled.nav`
  display: flex;
  align-items: center;
  height: 23px;
  padding-left: 2px;
  background: #121416;
`;
const CloseTab = styled.button`
  display: flex;
  width: 16px;
  color: #c9cbcd;
`;
const Tab = styled.button<{ $on?: boolean; $w: number }>`
  width: ${(p) => p.$w}px;
  height: ${(p) => (p.$on ? 22 : 23)}px;
  margin-top: ${(p) => (p.$on ? -5 : 0)}px;
  border: ${(p) => (p.$on ? "solid " + C.edge : "0")};
  border-width: ${(p) => (p.$on ? "0 2px 2px" : "0")};
  border-radius: 0 0 3px 3px;
  background: ${(p) => (p.$on ? C.panel : "transparent")};
  color: ${(p) => (p.$on ? "#0ff0d6" : "#fff")};
  font-size: ${(p) => (p.$on ? 15 : 12)}px;
  line-height: 18px;
  font-weight: bold;
`;

/* --------------------------------------------------------- deck sections */

const InspectorPanel = () => (
  <Section $w={199}>
    <Head>
      <HeadToggle $wide aria-label="Collapse"><Arrow s={12} /></HeadToggle>
      <HeadTitle $track>BASS Analog<Icon s={10} f="M3 1l9 7-9 7z" /></HeadTitle>
      <HeadButton aria-label="Edit channel"><Icon d={P.e} s={20} /></HeadButton>
    </Head>
    <Cluster>
      <ClusterShape width={191} height={64} viewBox="0 0 191 64" aria-hidden="true">
        <path d="M6 0h179a6 6 0 0 1 6 6v39a6 6 0 0 1-6 6H62L28 61C14 65 0 56 0 42V6a6 6 0 0 1 6-6z" fill="#b4c3d8" />
      </ClusterShape>
      <Keys><Key aria-label="Mute">M</Key><Key $sep aria-label="Solo">S</Key></Keys>
      <Keys>
        <Key $bg="#2fae4b">R</Key>
        <Key>W</Key>
        <Key aria-label="Channel settings"><Icon s={14} w={1} d="M2 2h12v12H2zM7 2v12M11 2v12M7 8h7" /></Key>
        <Key aria-label="Fades"><Icon s={16} w={2} d="M1 3h3l8 10h3M15 3h-3L4 13H1" /></Key>
      </Keys>
      <Rounds>
        <RoundKey $rec aria-label="Record enable" />
        <RoundKey aria-label="Monitor"><Icon s={13} f="M3 6h3l5-5v14l-5-5H3z" /></RoundKey>
      </Rounds>
      <Keys>
        <Key $bg="#e0aa62" aria-label="Musical timebase"><Icon s={14} f="M9 1h2v11a3 3 0 1 1-2-2z" /></Key>
        <Key aria-label="Lock"><Icon s={15} f="M6 8h9v7H6z" d="M7 8V5a3 3 0 0 0-5 0v2" /></Key>
        <Key aria-label="Lanes"><Icon s={18} w={1} d="M0 5h16v7H0zM5 5v7M11 5v7" /></Key>
        <Key aria-label="Freeze"><Icon s={15} d="M8 1l6 3v8l-6 3-6-3V4zM8 1v14M2 4l12 8M14 4L2 12" /></Key>
      </Keys>
    </Cluster>
    <Levels>
      <LevelIcons>
        <Icon s={19} f="M0 13h16V3z" />
        <Icon s={19} f="M0 3l8 6 8-6v10H0z" />
        <svg width={26} height={14} viewBox="0 0 26 14" aria-hidden="true">
          <path d="M5 3v8L0 7zM21 3v8l5-4zM13 1a6 6 0 1 0 0 12 6 6 0 1 0 0-12z" fill="currentColor" />
          <path d="M13 3v4h4" stroke="#4b4f56" strokeWidth={2} fill="none" />
        </svg>
      </LevelIcons>
      <LevelBox>
        <LevelValue htmlFor="vol">-7.30</LevelValue>
        <Slider id="vol" type="range" $thumb $fill={53} $c="#5b8fc0" defaultValue={53} />
        <LevelValue $c htmlFor="pan">C</LevelValue>
        <Slider id="pan" type="range" $thumb defaultValue={50} />
        <LevelValue htmlFor="delay">0.00</LevelValue>
        <Slider id="delay" type="range" $thumb defaultValue={50} />
      </LevelBox>
    </Levels>
    <Black $mt={14}>
      <Row $dim $bold><Icon s={14} w={1} d="M8 1l5 6-5 7-5-7z" /><span>No Track Preset</span><Icon s={14} d="M5 4a6 6 0 1 0 6 0M12 1v4H8" /></Row>
      <Row $bold><Icon s={14} w={1} d="M0 8h9M6 5l3 3-3 3M10 2h4v12h-4" /><span>Stereo In</span></Row>
      <Row $bold><Icon s={14} w={1} d="M6 8h9M12 5l3 3-3 3M5 2H1v12h4" /><span>BASS</span></Row>
    </Black>
  </Section>
);

const GoIcon = () => <Icon s={14} d="M8 2a6 6 0 1 0 0 12A6 6 0 1 0 8 2" f="M6 5l5 3-5 3z" w={2} />;

const VersionsPanel = () => (
  <Section>
    <Head>
      <HeadToggle aria-label="Collapse"><Arrow s={11} /></HeadToggle>
      <HeadTitle>Track Versions</HeadTitle>
      <HeadButton $bg={B} $dark aria-label="Track versions"><Icon s={18} f="M0 2h2v10H0zM4 2h3v12H4zM9 4l6-4v11l-6 4z" /></HeadButton>
    </Head>
    <VersionFrame>
      <VersionTable>
        <thead><tr><th>Name</th><th>ID</th></tr></thead>
        <tbody>
          <tr><td>v1</td><td>1</td></tr>
          <tr aria-selected="true"><td>Version One</td><td>2</td></tr>
        </tbody>
      </VersionTable>
    </VersionFrame>
    <Black $mt={13} $row={24}>
      {["New Version", "Duplicate Version", "Delete Version"].map((t) => (
        <Row key={t}><span>{t}</span><Chip aria-label={t}><GoIcon /></Chip></Row>
      ))}
    </Black>
  </Section>
);

const quicks: [string, string, number][] = [
  ["Filter Cutoff", "480", 51],
  ["Filter Resonance", "58.5", 60],
  ["Filter Distortion", "19.5", 19],
  ["Filter Env Amount", "12.0", 57],
  ["DCF Attack", "0", 0],
  ["DCF Decay", "93", 19],
  ["DCA Attack", "0", 0],
  ["DCA Decay", "764", 47],
];

const QuickPanel = () => (
  <Section $top={2}>
    <Head $h={25}>
      <HeadToggle aria-label="Collapse"><Arrow s={9} /></HeadToggle>
      <HeadTitle>Quick Controls<Faint><Icon s={14} w={2} d="M8 1l4 7-4 7-4-7z" /></Faint></HeadTitle>
      <HeadButton $bg={B} $dark aria-label="Quick controls"><Icon s={18} d="M8 2a6 6 0 1 0 0 12A6 6 0 1 0 8 2zM8 7l4 4" /></HeadButton>
    </Head>
    <MiniBar>
      <Mini $bg="#1f8aa2" aria-label="Power"><Icon s={12} d="M8 1v7M5 3a6 6 0 1 0 6 0" /></Mini>
      <Mini aria-label="Learn">L</Mini>
      <Mini aria-label="Reset"><Icon s={12} f="M0 7l6-5v9z" d="M4 7c1-7 9-6 9-1s-4 4-5 9" w={3} /></Mini>
      <Mini aria-label="First"><Icon s={13} f="M0 3h2v10H0zM8 3v10L3 8zM15 3v10l-6-5z" /></Mini>
      <MiniPair><Mini $bg="#25b543">R</Mini><Mini>W</Mini></MiniPair>
    </MiniBar>
    <QuickBox>
      {quicks.map(([n, v, f]) => (
        <Quick key={n}>
          <QuickText><span>{n}</span><span>{v}</span></QuickText>
          <Slider type="range" $fill={f} defaultValue={f} />
        </Quick>
      ))}
    </QuickBox>
  </Section>
);

const NotepadPanel = () => (
  <Section>
    <Head>
      <HeadToggle aria-label="Collapse"><Arrow s={11} /></HeadToggle>
      <HeadTitle>Notepad</HeadTitle>
      <HeadButton $bg="linear-gradient(#6ba0d6, #447bb8)" aria-label="Notepad"><Icon s={16} w={1} d="M1 1h14v14H1zM3 3h10v10H3zM5 5h6M5 7h6M5 9h3" /></HeadButton>
    </Head>
    <Notes aria-label="Notes" defaultValue="Notes for track." />
  </Section>
);

const ChordsPanel = () => (
  <Section $top={4}>
    <Head $h={26}>
      <HeadToggle aria-label="Collapse"><Arrow s={11} /></HeadToggle>
      <HeadTitle>Chords</HeadTitle>
      <HeadButton aria-label="Chords"><Icon s={18} f="M0 2h16v2H0zM0 7h16v2H0zM0 12h16v2H0zM7 1h2v14H7zM4 0h8v1H4z" /></HeadButton>
    </Head>
    <Label $h={24}>Follow Chord Track</Label>
    <Black>
      <Drop><select aria-label="Follow chord track"><option>Off</option></select><Caret /></Drop>
      <Drop><select aria-label="Follow target"><option> </option></select><Caret /></Drop>
    </Black>
    <Label>Voicings</Label>
    <Black>
      <Drop><select aria-label="Voicings"><option>From Chord Track</option></select><Caret /></Drop>
      <DropRow>
        <Drop><select aria-label="Voicing library"><option> </option></select><Caret /></Drop>
        <Chip aria-label="Configure voicings"><Gear /></Chip>
      </DropRow>
    </Black>
    <Label>Live Transform</Label>
    <Black $row={20}>
      <Drop><select aria-label="Live transform"><option>Off</option></select><Caret /></Drop>
    </Black>
    <TipLine><Tip role="tooltip">The live</Tip></TipLine>
    <Black $row={20}>
      <Row><span>Chord Pads</span><Chip aria-label="Chord Pads"><GoIcon /></Chip></Row>
    </Black>
    <Label>Chord Pads' Player</Label>
    <Black $row={20}>
      <Drop $on><select aria-label="Chord pads player"><option>Piano Player</option></select><Caret /></Drop>
    </Black>
  </Section>
);

const RangeBlock = ({ name, v }: { name: string; v: string }) => (
  <>
    <RangeHead><span>{name}</span><span>min</span><span>max</span></RangeHead>
    <Black $row={20}>
      {[0, 1].map((k) => (
        <RangeRow key={k}>
          <Drop $on><select aria-label={`${name} ${k + 1}`}><option>OFF</option></select><Caret /></Drop>
          <span>{v}</span><Spin /><span>{v}</span><Spin />
        </RangeRow>
      ))}
    </Black>
  </>
);

const MidiPanel = () => (
  <Section $w={187} $top={4}>
    <Head $h={26}>
      <HeadToggle aria-label="Collapse"><Arrow s={11} /></HeadToggle>
      <HeadTitle>MIDI Modifiers</HeadTitle>
      <HeadButton aria-label="MIDI modifiers"><Icon s={18} w={1} d="M3 4h10v8H3zM0 8h16M8 4v8" /></HeadButton>
    </Head>
    <ModGrid $mt={11} $row={24}>
      {["Transpose", "Vel. Shift"].map((t) => (
        <React.Fragment key={t}>
          <ModLabel>{t}</ModLabel>
          <ModCell>
            <span /><span>0</span><Spin />
            <Slider type="range" $thumb aria-label={t} defaultValue={50} />
          </ModCell>
        </React.Fragment>
      ))}
    </ModGrid>
    <ModGrid $mt={11} $row={21}>
      {["Vel. Comp.", "Len. Comp."].map((t) => (
        <React.Fragment key={t}>
          <ModLabel>{t}</ModLabel>
          <ModCell><Spin /><span>1/1</span><Spin /></ModCell>
        </React.Fragment>
      ))}
    </ModGrid>
    <RangeBlock name="Random" v="0" />
    <RangeBlock name="Range" v="1" />
    <Black $mt={12} $row={23}>
      {["HMT: Follow", "HMT: Use for Analysis"].map((t) => (
        <Row key={t}><span>{t}</span><Chip aria-label={t}><Icon s={8} f="M0 5h16v6H0z" /></Chip></Row>
      ))}
    </Black>
  </Section>
);

const bands: [string, string, string, string][] = [
  ["1 LO", "0.0dB", "158.0Hz", "M1 3h5l4 9 2-4h4"],
  ["2 LMF", "0.0dB", "800.0Hz", "M1 13h3L9 3l4 10h3M1 1v4h3V1"],
  ["3 HMF", "3.0dB", "2000Hz", "M1 13h3L9 3l4 10h3M1 1v4h3V1"],
  ["4 HI", "0.0dB", "1300Hz", "M0 9h4l2 4 4-9h6"],
];
const onBg = [
  "linear-gradient(90deg, #286880 48%, #1fa6dc 48% 52%, #286880 52%)",
  "linear-gradient(90deg, #286880 30%, #1fa6dc 30% 34%, #286880 34%)",
  "linear-gradient(90deg, #5f8584 2px, #93989a 2px 71px, #5f8584 71px)",
];

const EqPanel = () => (
  <Section $top={5} $w={459}>
    <EqGraph />
    <EqControls>
      <EqColumn>
        <EqHead $pre><Lamp />PRE<span /><span /></EqHead>
        <PreRow>HC<span>12</span></PreRow>
        <PreRow>LC<span>12</span></PreRow>
        <PreRow $gain>Gain</PreRow>
        <PreRow $phase>Phase 0°</PreRow>
      </EqColumn>
      {bands.map(([n, g, f, d], k) => (
        <EqColumn key={n}>
          <EqHead $on={k === 0}><Icon s={11} f="M7 0h2v7H7zM3 3a7 7 0 1 0 10 0l-2 2v4H5V5z" /><span>{n}</span><Icon s={12} w={1} d={d} /></EqHead>
          {[g, f, "1.0"].map((v, j) => (
            <EqField key={j} aria-label={`${n} value ${j + 1}`} defaultValue={v} $bg={k === 0 ? onBg[j] : undefined} />
          ))}
        </EqColumn>
      ))}
    </EqControls>
  </Section>
);

const inserts: [string, "off" | "on"][] = [["VintageCompressor", "off"], ["Quadrafuzz v2", "on"], ["VST Bass Amp", "on"]];

const Channel = () => (
  <>
    <SlotWrap>
      <SlotColumn $top={3}>
        {inserts.map(([n, k]) => (
          <Slot key={n} $h={17} $kind={k}>
            <Icon s={11} d="M2 2h12M4 7h8v7H4z" /><Icon d={P.e} s={11} /><span>{n}</span><Caret />
          </Slot>
        ))}
        {Array.from({ length: 13 }, (_, i) => <Slot key={i} $h={17} aria-label={`Insert ${i + 4}`} />)}
      </SlotColumn>
      <GreenLine />
    </SlotWrap>
    <SlotColumn $top={4}>
      <SendSlot>
        <SendHead><Icon s={12} d="M1 1h14v14H1zM8 3v5M5 5a4 4 0 1 0 6 0" w={2} /><Icon s={12} f="M8 1v14a7 7 0 0 1 0-14zM11 7h2v2h-2z" /><Caret /></SendHead>
        <SendValue><span>FX 2-REVerence</span><span>0.00</span></SendValue>
      </SendSlot>
      {Array.from({ length: 7 }, (_, i) => <Slot key={i} $h={37} aria-label={`Send ${i + 2}`} />)}
    </SlotColumn>
    <SlotColumn $top={4}>
      <RouteSlot>BASS</RouteSlot>
      {Array.from({ length: 7 }, (_, i) => <Slot key={i} $h={32} aria-label={`Output ${i + 2}`} />)}
    </SlotColumn>
    <FaderColumn>
      <Well $h={15} />
      <Well $h={23}><PanDot />C</Well>
      <Pads><Pad>M</Pad><Pad>S</Pad><Pad>L</Pad><Pad aria-label="Edit"><Icon d={P.e} s={10} /></Pad></Pads>
      <FaderArea>
        <Fader type="range" aria-label="Volume" defaultValue={46} />
        <svg width={14} height={150} viewBox="0 0 14 150" aria-hidden="true">
          <path d="M0 10h10M0 39h10M0 64h10M0 83h10M0 99h10M0 110h10M0 125h10M0 134h10M0 139h10M0 145h10" stroke="#7b8086" />
        </svg>
        <PeakMeter />
      </FaderArea>
      <Readout><span>-10.0</span><span>-6.6</span></Readout>
      <Pads><Pad>R</Pad><Pad>W</Pad><Pad aria-label="Pad 3" /><Pad aria-label="Pad 4" /></Pads>
      <ChannelNo><Icon s={18} w={1} d="M6 3a5 5 0 1 0 0 10A5 5 0 1 0 6 3zM11 3a5 5 0 1 0 0 10A5 5 0 1 0 11 3z" />10</ChannelNo>
      <ChannelName>BASS</ChannelName>
    </FaderColumn>
  </>
);

/* -------------------------------------------------------------------- app */

const laneHeights = [82, 82, 82, 82, 82, 82, 82, 82, 20, 20, 20];

export default function App() {
  return (
    <Shell>
      <Global />
      <TitleBar>
        <Lights>
          <Light $c="#fb5d56" aria-label="Close" />
          <Light $c="#fcbb3e" aria-label="Minimize" />
          <Light $c="#32c748" aria-label="Zoom" />
        </Lights>
        <Title>
          <svg width={12} height={15} viewBox="0 0 12 15" aria-hidden="true">
            <path d="M0 0h9l3 3v12H0z" fill="#f1f1f1" />
            <path d="M8 4L3 8l5 4V9L6 8l2-1z" fill="#c8203a" />
          </svg>
          Cubase Pro Project - Eight Good Reasons
        </Title>
        <Fill />
      </TitleBar>
      <TopToolbar />
      <InfoLine>
        {info.map(([k, v, w]) => (
          <InfoCell key={k} $w={w}><dt>{k}</dt><dd>{v}</dd></InfoCell>
        ))}
        <Fill />
        <InfoGear aria-label="Set up info line"><Gear s={14} /></InfoGear>
      </InfoLine>

      <Workspace>
        <TrackList>
          <ListHead>
            <SmallGroup>
              <button aria-label="Add track"><Icon s={10} d="M8 0v16M0 8h16" w={4} /></button>
              <button aria-label="Track presets"><Caret /></button>
            </SmallGroup>
            <Count>20 / 20</Count>
            <SmallGroup>
              <button aria-label="Agents"><Icon s={13} d="M1 1h14v14H1zM3 5h10M3 8h10M3 11h10" /></button>
              <button aria-label="Find track"><Icon s={13} d="M9 1a5 5 0 1 0 0 10A5 5 0 1 0 9 1zM6 10l-5 5" /></button>
            </SmallGroup>
          </ListHead>
          {tracks.map((t, i) => <TrackItem key={t.n} t={t} i={i} />)}
          {["Group Tracks", "FX Channels", "Input/Output Channels"].map((n) => (
            <FolderRow key={n}>
              <FolderTag>
                <svg width={17} height={15} viewBox="0 0 17 15" aria-hidden="true"><path d="M1 3V1h8v2h8v12H0V3z" fill="#fff" /><path d="M1 3.500h15" stroke="#9aa7b6" /></svg>
              </FolderTag>
              <FolderName>{n}</FolderName>
              <Gutter />
            </FolderRow>
          ))}
          <ListFoot><span>-</span><Caret /><Gear s={13} /></ListFoot>
        </TrackList>

        <Timeline>
          <RulerRow>
            <Ruler>
              {bars.map((b) => <RulerMark key={b} style={{ left: barX(b) }}>{b}</RulerMark>)}
              <Locator />
              <Cursor />
            </Ruler>
            <Rail><RulerButton aria-label="Ruler format"><Arrow s={8} /></RulerButton></Rail>
          </RulerRow>
          <Stage>
            <Canvas>
              {bars.slice(1).map((b) => <GridLine key={b} style={{ left: barX(b) - 1 }} />)}
              {laneHeights.map((h, i) => (
                <Lane key={i} $h={h}>
                  {clips.map((c, k) => (c.lane === i ? <ClipView key={k} c={c} i={k} /> : null))}
                </Lane>
              ))}
              <Cursor />
            </Canvas>
            <Rail>
              <Icon s={12} d="M13 1L3 15" w={1} />
              <Line $len={52} $knob={47} />
              <Fill $size={10} />
              <Line $flow />
              <Fill $size={8} />
              <Arrow s={8} />
              <span>-</span>
              <Line $len={56} $knob={11} />
              <span>+</span>
            </Rail>
          </Stage>
          <BottomScroll>
            <ScrollTrack><ScrollThumb /></ScrollTrack>
            <Arrow s={8} />
            <span>-</span>
            <ZoomSlider type="range" aria-label="Horizontal zoom" defaultValue={30} />
            <span>+</span>
          </BottomScroll>
        </Timeline>
      </Workspace>

      <Lower>
        <RackHandle />
        <Deck>
          <InspectorPanel />
          <VersionsPanel />
          <QuickPanel />
          <NotepadPanel />
          <ChordsPanel />
          <MidiPanel />
          <EqPanel />
          <Channel />
        </Deck>
        <DeckFoot><Tick /><Rule /></DeckFoot>
      </Lower>
      <Tabs>
        <CloseTab aria-label="Close zone"><Icon s={11} d="M2 2l12 12M14 2L2 14" w={3} /></CloseTab>
        <Tab $on $w={109}>Inspector</Tab>
        <Tab $w={131}>Sampler Control</Tab>
        <Tab $w={111}>Chord Pads</Tab>
        <CloseTab aria-label="Set up tabs"><Gear s={14} /></CloseTab>
      </Tabs>
    </Shell>
  );
}
